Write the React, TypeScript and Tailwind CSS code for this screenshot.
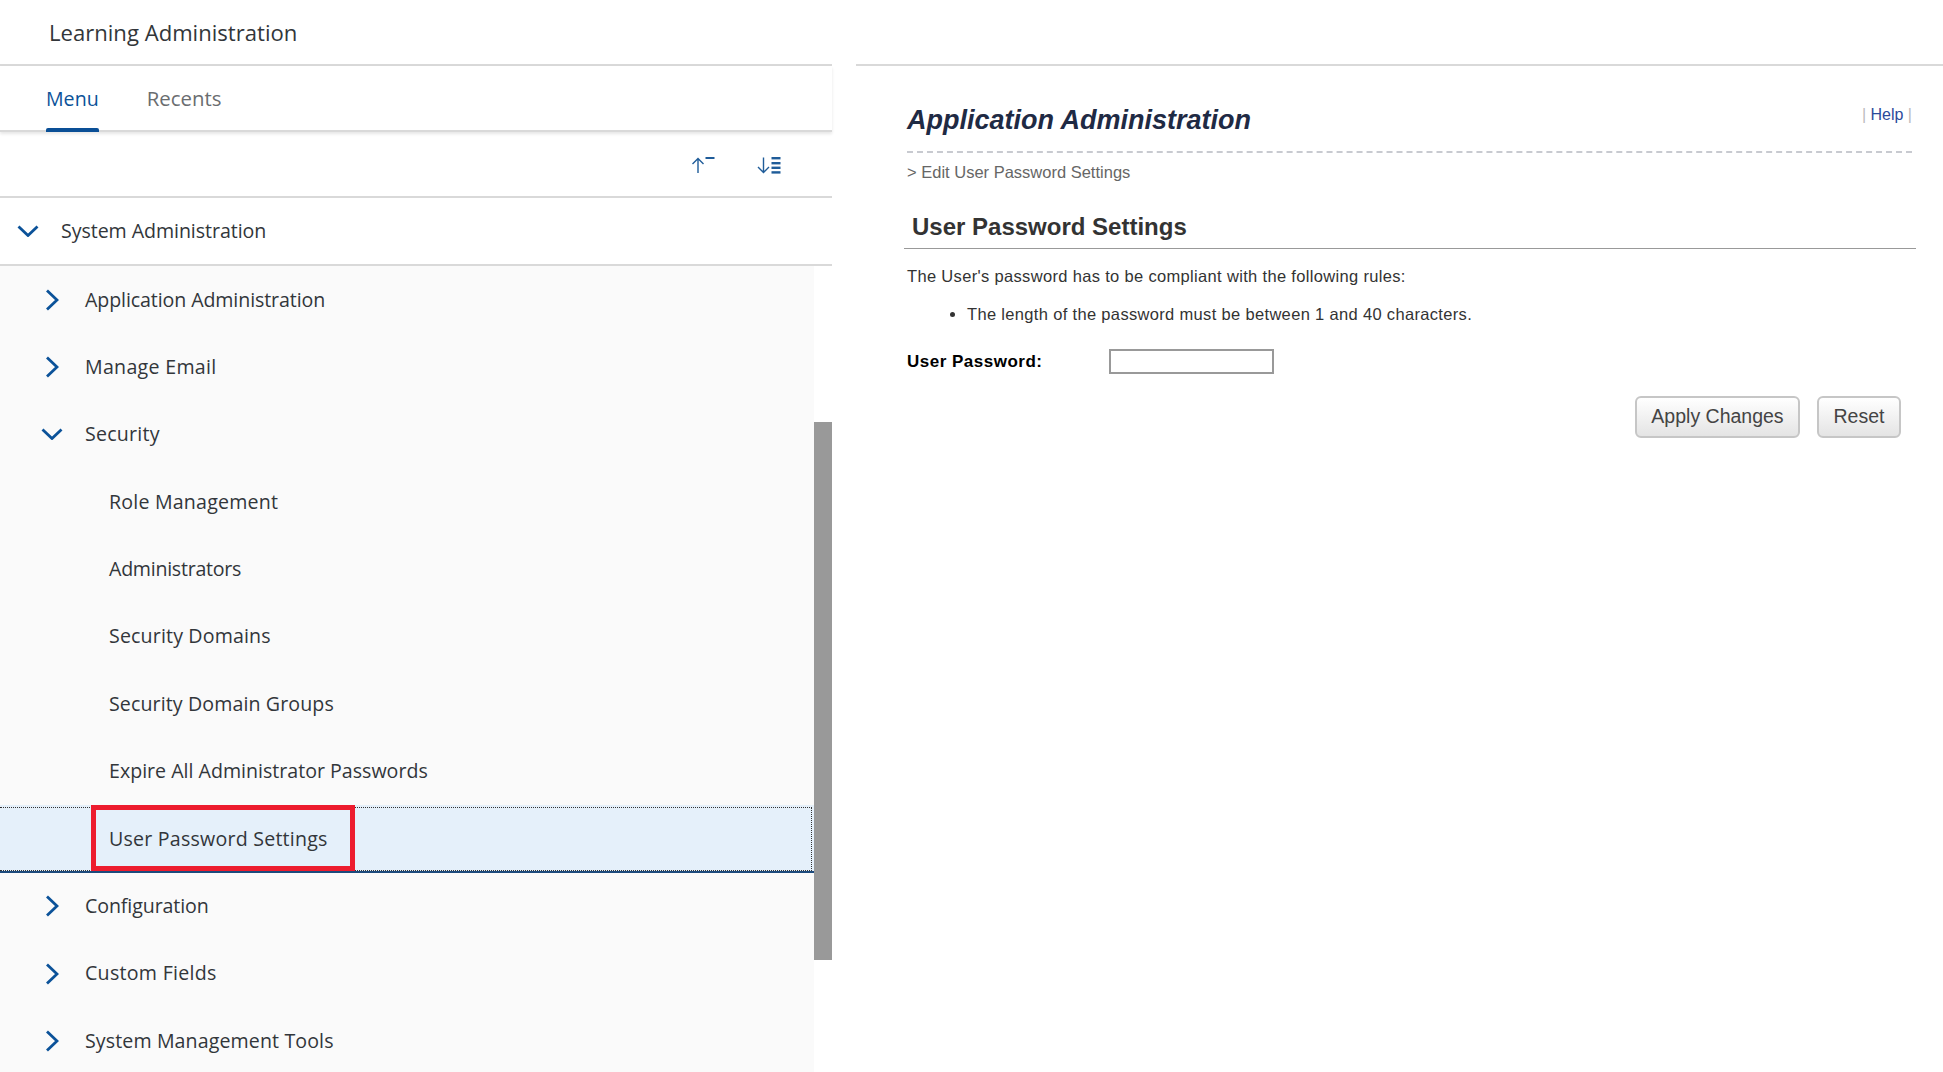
import React from "react";

const sans = "font-['Open_Sans',sans-serif]";

function ChevronRight() {
  return (
    <svg width="14" height="22" viewBox="0 0 14 22" className="shrink-0">
      <path d="M2 1.5 L12 11 L2 20.5" fill="none" stroke="#0b5299" strokeWidth="2.8" />
    </svg>
  );
}

function ChevronDown() {
  return (
    <svg width="22" height="12" viewBox="0 0 22 12" className="shrink-0">
      <path d="M1.5 1.5 L11 10.5 L20.5 1.5" fill="none" stroke="#0b5299" strokeWidth="2.8" />
    </svg>
  );
}

function ExpandIcon() {
  return (
    <svg width="24" height="16" viewBox="0 0 24 16">
      <path d="M7 16 V1.5 M1.5 7 L7 1.5 L12.5 7" fill="none" stroke="#1f5c99" strokeWidth="1.4" />
      <rect x="14.5" y="0" width="9" height="2" fill="#1f5c99" />
    </svg>
  );
}

function CollapseIcon() {
  return (
    <svg width="24" height="17" viewBox="0 0 24 17">
      <path d="M6.5 0.5 V15.5 M1 10 L6.5 15.5 L12 10" fill="none" stroke="#1f5c99" strokeWidth="1.4" />
      <rect x="14.5" y="0" width="9" height="2.4" fill="#1f5c99" />
      <rect x="14.5" y="5" width="9" height="2.4" fill="#1f5c99" />
      <rect x="14.5" y="9.6" width="9" height="2.4" fill="#1f5c99" />
      <rect x="14.5" y="14.2" width="9" height="2.4" fill="#1f5c99" />
    </svg>
  );
}

function Row({ label, icon, track = "" }: { label: string; icon?: "right" | "down"; track?: string }) {
  return (
    <div className="h-[67.4px] flex items-center text-[19.6px] text-[#32363a]">
      {icon ? (
        <div className="flex items-center w-[85px] pl-[45px]">
          {icon === "right" ? <ChevronRight /> : <div className="-ml-[4px]"><ChevronDown /></div>}
        </div>
      ) : (
        <div className="w-[109px]" />
      )}
      <span className={`pb-[1px] ${track}`}>{label}</span>
    </div>
  );
}

function SelectedRow({ label }: { label: string }) {
  return (
    <div className="relative h-[67.4px] flex items-center text-[19.6px] text-[#32363a] bg-[#e5f0fa] border-b-2 border-[#1c4a7c]">
      <div className="w-[109px]" />
      <span className="pt-[2px] tracking-[0.22px]">{label}</span>
      <div className="absolute left-0 right-[2px] top-[2px] bottom-0 border-t border-b border-r border-dotted border-[#333333]" />
      <div className="absolute left-[91px] top-0 w-[264px] h-[66px] border-[5px] border-[#ed1c2e]" />
    </div>
  );
}

function Btn({ label, w }: { label: string; w: string }) {
  return (
    <button className={`${w} h-[42px] rounded-[6px] border-2 border-[#c6c6c6] bg-gradient-to-b from-[#ffffff] to-[#e4e4e4] text-[19.5px] text-[#444444] font-['Liberation_Sans',sans-serif]`}>
      {label}
    </button>
  );
}

export default function App() {
  return (
    <div className="h-[1072px] w-[1943px] overflow-hidden bg-white flex">
      <div className={`w-[832px] shrink-0 flex flex-col ${sans}`}>
        <div className="h-[66px] shrink-0 border-b-2 border-[#d9d9d9] flex items-center pl-[49px] pt-[1px] text-[22.1px] text-[#32363a]">
          Learning Administration
        </div>
        <div className="h-[66px] shrink-0 border-b-2 border-[#d9d9d9] shadow-[0_2px_3px_rgba(0,0,0,0.1)] flex items-start pl-[46px] gap-[48px] text-[19.6px]">
          <div className="h-[66px] flex flex-col text-[#0b5299]">
            <div className="flex-1 flex items-center pt-[4px]">Menu</div>
            <div className="h-[4px] rounded-t-[2px] bg-[#0a4f96]" />
          </div>
          <div className="h-[64px] flex items-center pt-[1px] text-[20.4px] text-[#6a6d70]">Recents</div>
        </div>
        <div className="h-[66px] shrink-0 border-b-2 border-[#d9d9d9] flex items-center justify-end pr-[51px] gap-[42px] pt-[2px]">
          <ExpandIcon />
          <CollapseIcon />
        </div>
        <div className="h-[68px] shrink-0 border-b-2 border-[#d9d9d9] w-[832px] flex items-center text-[19.6px] text-[#32363a]">
          <div className="w-[61px] pl-[17px]"><ChevronDown /></div>
          <span className="tracking-[-0.06px]">System Administration</span>
        </div>
        <div className="flex-1 flex min-h-0">
          <div className="w-[814px] bg-[#fafafa]">
            <Row label="Application Administration" icon="right" track="tracking-[-0.1px]" />
            <Row label="Manage Email" icon="right" track="tracking-[0.3px]" />
            <Row label="Security" icon="down" track="tracking-[0.23px]" />
            <Row label="Role Management" track="tracking-[0.2px]" />
            <Row label="Administrators" track="tracking-[-0.26px]" />
            <Row label="Security Domains" track="tracking-[0.15px]" />
            <Row label="Security Domain Groups" track="tracking-[0.11px]" />
            <Row label="Expire All Administrator Passwords" />
            <SelectedRow label="User Password Settings" />
            <Row label="Configuration" icon="right" track="tracking-[-0.1px]" />
            <Row label="Custom Fields" icon="right" track="tracking-[0.28px]" />
            <Row label="System Management Tools" icon="right" track="tracking-[0.11px]" />
          </div>
          <div className="w-[18px]">
            <div className="mt-[156px] h-[538px] bg-[#999999]" />
          </div>
        </div>
      </div>

      <div className="ml-[24px] flex-1 flex flex-col font-['Liberation_Sans',sans-serif]">
        <div className="h-[66px] border-b-2 border-[#d9d9d9]" />
        <div className="pl-[51px] pr-[31px]">
          <div className="h-[87px] border-b-2 border-dashed border-[#c8cad0] relative flex items-start justify-between">
            <h1 className="mt-[36px] text-[27px] leading-[36px] font-bold italic text-[#1f2a44]">Application Administration</h1>
            <div className="mt-[38px] text-[16px] leading-[22px] text-[#2b4a9b]">
              <span className="text-[#bbbbbb]">| </span>Help<span className="text-[#bbbbbb]"> |</span>
            </div>
          </div>
          <div className="mt-[9px] text-[16.5px] leading-[20px] text-[#666666]">&gt; Edit User Password Settings</div>
        </div>
        <div className="ml-[48px] mr-[27px] mt-[30px] border-b border-[#999999] h-[37px] pl-[8px] text-[24px] leading-[30px] font-bold text-[#333333]">
          User Password Settings
        </div>
        <div className="pl-[51px] pr-[31px]">
          <p className="mt-[17px] text-[16.5px] tracking-[0.33px] leading-[20px] text-[#333333]">The User's password has to be compliant with the following rules:</p>
          <ul className="mt-[18px] pl-[60px] list-disc text-[16.5px] tracking-[0.33px] leading-[20px] text-[#333333]">
            <li>The length of the password must be between 1 and 40 characters.</li>
          </ul>
          <div className="mt-[25px] flex items-center">
            <label className="w-[202px] text-[17px] tracking-[0.5px] font-bold text-black">User Password:</label>
            <input className="w-[165px] h-[25px] border-2 border-[#999999] bg-white" />
          </div>
        </div>
        <div className="mt-[21px] pr-[42px] flex justify-end gap-[17px]">
          <Btn label="Apply Changes" w="w-[165px]" />
          <Btn label="Reset" w="w-[84px]" />
        </div>
      </div>
    </div>
  );
}
